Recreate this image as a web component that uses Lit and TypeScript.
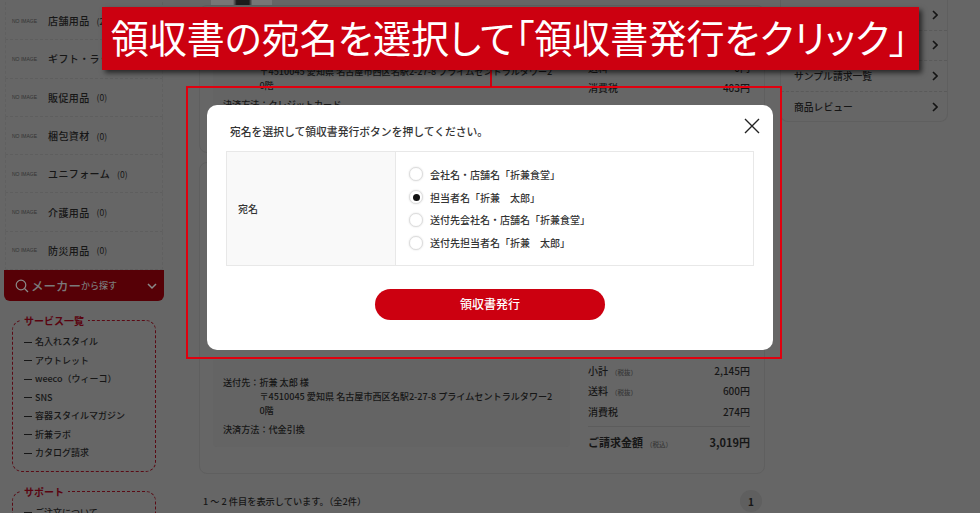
import { LitElement, css, html } from 'lit';
import { customElement } from 'lit/decorators.js';

const categories = [
  ['店舗用品', '(2)'],
  ['ギフト・ラッピング', '(0)'],
  ['販促用品', '(0)'],
  ['梱包資材', '(0)'],
  ['ユニフォーム', '(0)'],
  ['介護用品', '(0)'],
  ['防災用品', '(0)'],
];

const services = ['名入れスタイル', 'アウトレット', 'weeco（ウィーコ）', 'SNS', '容器スタイルマガジン', '折兼ラボ', 'カタログ請求'];

const addressees = [
  '会社名・店舗名「折兼食堂」',
  '担当者名「折兼　太郎」',
  '送付先会社名・店舗名「折兼食堂」',
  '送付先担当者名「折兼　太郎」',
];

const chevron = html`<svg class="chev" viewBox="0 0 6 10" width="6" height="10"><path d="M1 1l4 4-4 4" fill="none" stroke="#141414" stroke-width="1.6"/></svg>`;

// the page behind the dialog is drawn in its dimmed colours
@customElement('app-root')
export class AppRoot extends LitElement {
  static styles = css`
    :host {
      display: block;
      position: relative;
      width: 980px;
      height: 513px;
      overflow: hidden;
      background: #666;
      color: #161616;
      font-family: "Noto Sans CJK JP", "Noto Sans", sans-serif;
      font-size: 10px;
    }

    .page {
      display: flex;
      height: 513px;
      overflow: hidden;
      background: #666;
    }

    /* left column */
    .side {
      width: 160px;
      margin-left: 4px;
      flex: none;
      padding-top: 2px;
    }
    .cat {
      height: 38.3px;
      box-sizing: border-box;
      border-bottom: 1px dashed #5e5e5e;
      display: flex;
      align-items: center;
      margin: 0 1px;
      border-left: 1px dashed #606060;
      border-right: 1px dashed #606060;
    }
    .noimg {
      width: 26px;
      margin-left: 6px;
      font-size: 5px;
      color: #333;
      white-space: nowrap;
      font-family: "Liberation Sans", sans-serif;
    }
    .cat b {
      font-weight: 500;
      font-size: 10px;
      margin-left: 10px;
      letter-spacing: 0.4px;
      white-space: nowrap;
    }
    .cat i {
      font-style: normal;
      font-size: 8.5px;
      margin-left: 7px;
      white-space: nowrap;
    }
    .maker {
      height: 31px;
      background: #560006;
      border-radius: 0 0 6px 6px;
      color: #7a7a7a;
      display: flex;
      align-items: center;
      padding: 0 7px 0 11px;
      gap: 3px;
    }
    .maker svg { stroke: #8a8a8a; }
    .maker .big { font-size: 12.5px; font-weight: 500; margin-left: -1px; }
    .maker .small { font-size: 9px; font-weight: 500; margin-left: -3px; }
    .maker .down { margin-left: auto; }
    .box {
      position: relative;
      margin: 19px 8px 0;
      border: 1px dashed #5a0a14;
      border-radius: 10px;
      padding: 12px 0 8px 11px;
    }
    .box h3 {
      position: absolute;
      top: -7px;
      left: 7px;
      margin: 0;
      padding: 0 4px;
      background: #666;
      color: #5a0410;
      font-size: 10px;
      line-height: 14px;
      font-weight: 700;
    }
    .box ul { list-style: none; margin: 0; padding: 0; }
    .box li {
      height: 18.5px;
      line-height: 18.5px;
      font-size: 9px;
      font-weight: 500;
      white-space: nowrap;
      display: flex;
      align-items: center;
      gap: 3px;
    }
    .box li::before {
      content: "";
      width: 8px;
      height: 1px;
      background: #161616;
      flex: none;
    }

    /* centre column */
    .main {
      width: 566px;
      margin-left: 35px;
      flex: none;
    }
    .thumb {
      width: 61px;
      height: 6px;
      margin-left: 12px;
      background: linear-gradient(90deg, #777 0 36%, #1c1c1c 42% 62%, #777 68%);
    }
    .card {
      border: 1px solid #5f5f5f;
      border-radius: 8px;
      box-sizing: border-box;
      display: flex;
      padding: 0 14px 0 13px;
    }
    .card.first {
      height: 148px;
      padding-top: 44px;
      margin-top: -1px;
    }
    .card.second {
      height: 312px;
      margin-top: 9px;
      padding-top: 197px;
    }
    .info {
      width: 357px;
      flex: none;
      box-sizing: border-box;
      padding: 15px 10px 0;
      background: #646464;
      border-radius: 0 0 4px 4px;
      font-size: 9.1px;
      line-height: 14px;
      font-weight: 500;
      height: 87px;
    }
    .card.first .info { padding-top: 0; height: 95px; }
    .card.first .totals { padding-top: 7px; }
    .ship { display: flex; margin-bottom: 5px; white-space: nowrap; }
    .ship .addr { width: 296px; }
    .totals {
      width: 162px;
      margin-left: 18px;
      flex: none;
      font-size: 10px;
      font-weight: 500;
    }
    .tr {
      display: flex;
      justify-content: space-between;
      align-items: center;
      height: 20.5px;
    }
    .tr small { font-size: 6.5px; color: #383838; margin-left: 3px; }
    .tr.sum {
      margin-top: 4px;
      height: 30px;
      border-top: 1px solid #5c5c5c;
      font-size: 11px;
      font-weight: 700;
    }
    .tr.sum small { font-weight: 500; }
    .pager {
      display: flex;
      justify-content: space-between;
      align-items: center;
      margin-top: 16px;
      padding: 0 3px 0 4px;
      font-size: 9.2px;
      font-weight: 500;
    }
    .pager .num {
      width: 22px;
      height: 22px;
      border-radius: 50%;
      background: #5f5f5f;
      display: flex;
      align-items: center;
      justify-content: center;
      font-size: 10px;
      font-weight: 700;
    }

    /* right column */
    .menu {
      width: 168px;
      margin: 0 0 0 15px;
      height: 122px;
      box-sizing: border-box;
      border: 1px solid #5f5f5f;
      border-top: none;
      border-radius: 0 0 8px 8px;
      flex: none;
    }
    .menu div {
      height: 30.5px;
      box-sizing: border-box;
      border-bottom: 1px dashed #5a5a5a;
      display: flex;
      align-items: center;
      justify-content: space-between;
      padding: 0 9px 0 13px;
      font-size: 9.8px;
      font-weight: 500;
    }
    .menu div:last-child { border-bottom: none; }

    /* dialog and annotation float over the page */
    .modal {
      position: absolute;
      left: 207px;
      top: 105px;
      width: 566px;
      height: 245px;
      box-sizing: border-box;
      background: #fff;
      border-radius: 10px;
      padding: 19px 19px 0;
      color: #333;
    }
    .modal p {
      margin: 0 0 12px 4px;
      font-size: 10.8px;
      line-height: 15px;
      font-weight: 500;
    }
    .close {
      position: absolute;
      right: 13px;
      top: 13px;
      display: block;
    }
    .form {
      display: flex;
      height: 115px;
      border: 1px solid #e8e8e8;
      width: 528px;
      box-sizing: border-box;
    }
    .form .th {
      width: 169px;
      flex: none;
      box-sizing: border-box;
      padding-left: 11px;
      background: #f9f9f9;
      border-right: 1px solid #e8e8e8;
      display: flex;
      align-items: center;
      font-size: 10px;
      font-weight: 500;
    }
    .form .td {
      padding-left: 13px;
      display: flex;
      flex-direction: column;
      justify-content: center;
    }
    .opt {
      height: 22.9px;
      display: flex;
      align-items: center;
      gap: 7px;
      font-size: 10px;
      font-weight: 500;
      white-space: nowrap;
    }
    .radio {
      width: 14px;
      height: 14px;
      box-sizing: border-box;
      border: 1px solid #ddd;
      border-radius: 50%;
      background: #fff;
      box-shadow: 0 0 2px rgba(0, 0, 0, 0.15);
      display: flex;
      align-items: center;
      justify-content: center;
    }
    .radio.on::after {
      content: "";
      width: 7px;
      height: 7px;
      border-radius: 50%;
      background: #111;
    }
    .issue {
      display: flex;
      align-items: center;
      justify-content: center;
      width: 230px;
      height: 31px;
      margin: 23px auto 0;
      padding-bottom: 2px;
      box-sizing: border-box;
      border-radius: 16px;
      background: #cc0010;
      color: #fff;
      font-size: 12px;
      font-weight: 500;
    }
    .frame {
      position: absolute;
      left: 186px;
      top: 86px;
      width: 596px;
      height: 273px;
      box-sizing: border-box;
      border: 2px solid #e0000f;
    }
    .stem {
      position: absolute;
      left: 490px;
      top: 70px;
      width: 2px;
      height: 17px;
      background: #cc0010;
    }
    .banner {
      position: absolute;
      left: 102px;
      top: 7px;
      width: 817px;
      height: 63px;
      box-sizing: border-box;
      padding: 0 2px 4px 0;
      background: #cc0010;
      box-shadow: 3px 3px 5px rgba(0, 0, 0, 0.6);
      display: flex;
      align-items: center;
      justify-content: center;
      color: #fff;
      font-size: 38.1px;
      white-space: nowrap;
      font-feature-settings: "palt";
    }
  `;

  render() {
    return html`
      <div class="page">
        <aside class="side">
          ${categories.map(
            ([name, count]) => html`
              <div class="cat"><span class="noimg">NO IMAGE</span><b>${name}</b><i>${count}</i></div>
            `
          )}
          <div class="maker">
            <svg width="14" height="14" viewBox="0 0 14 14" fill="none" stroke-width="1.2"><circle cx="6" cy="6" r="4.8"/><path d="m9.5 9.5 3.5 3.5"/></svg>
            <span class="big">メーカー</span><span class="small">から探す</span>
            <svg class="down" width="10" height="8" viewBox="0 0 10 8" fill="none" stroke-width="1.5"><path d="m1 2 4 4 4-4"/></svg>
          </div>
          <section class="box">
            <h3>サービス一覧</h3>
            <ul>${services.map((s) => html`<li>${s}</li>`)}</ul>
          </section>
          <section class="box">
            <h3>サポート</h3>
            <ul><li>ご注文について</li></ul>
          </section>
        </aside>

        <main class="main">
          <div class="thumb"></div>
          <div class="card first">
            <div class="info">
              <div class="ship">
                <span>送付先：</span>
                <span class="addr">折兼 太郎 様<br />〒4510045 愛知県 名古屋市西区名駅2-27-8 プライムセントラルタワー2<br />0階</span>
              </div>
              <div>決済方法：クレジットカード</div>
            </div>
            <div class="totals">
              <div class="tr"><span>送料</span><span>0円</span></div>
              <div class="tr"><span>消費税</span><span>403円</span></div>
            </div>
          </div>
          <div class="card second">
            <div class="info">
              <div class="ship">
                <span>送付先：</span>
                <span class="addr">折兼 太郎 様<br />〒4510045 愛知県 名古屋市西区名駅2-27-8 プライムセントラルタワー2<br />0階</span>
              </div>
              <div>決済方法：代金引換</div>
            </div>
            <div class="totals">
              <div class="tr"><span>小計<small>（税抜）</small></span><span>2,145円</span></div>
              <div class="tr"><span>送料<small>（税抜）</small></span><span>600円</span></div>
              <div class="tr"><span>消費税</span><span>274円</span></div>
              <div class="tr sum"><span>ご請求金額<small>（税込）</small></span><span>3,019円</span></div>
            </div>
          </div>
          <div class="pager"><span>1 ～ 2 件目を表示しています。（全2件）</span><span class="num">1</span></div>
        </main>

        <nav class="menu">
          <div><span></span>${chevron}</div>
          <div><span></span>${chevron}</div>
          <div><span>サンプル請求一覧</span>${chevron}</div>
          <div><span>商品レビュー</span>${chevron}</div>
        </nav>
      </div>

      <div class="modal">
        <p>宛名を選択して領収書発行ボタンを押してください。</p>
        <svg class="close" width="16" height="16" viewBox="0 0 16 16" fill="none" stroke="#222" stroke-width="1.4"><path d="m1 1 14 14M15 1 1 15"/></svg>
        <div class="form">
          <div class="th">宛名</div>
          <div class="td">
            ${addressees.map(
              (a, i) => html`<div class="opt"><span class="radio ${i === 1 ? 'on' : ''}"></span>${a}</div>`
            )}
          </div>
        </div>
        <div class="issue">領収書発行</div>
      </div>

      <div class="frame"></div>
      <div class="stem"></div>
      <div class="banner">領収書の宛名を選択して「領収書発行をクリック」</div>
    `;
  }
}

declare global {
  interface HTMLElementTagNameMap {
    'app-root': AppRoot;
  }
}
